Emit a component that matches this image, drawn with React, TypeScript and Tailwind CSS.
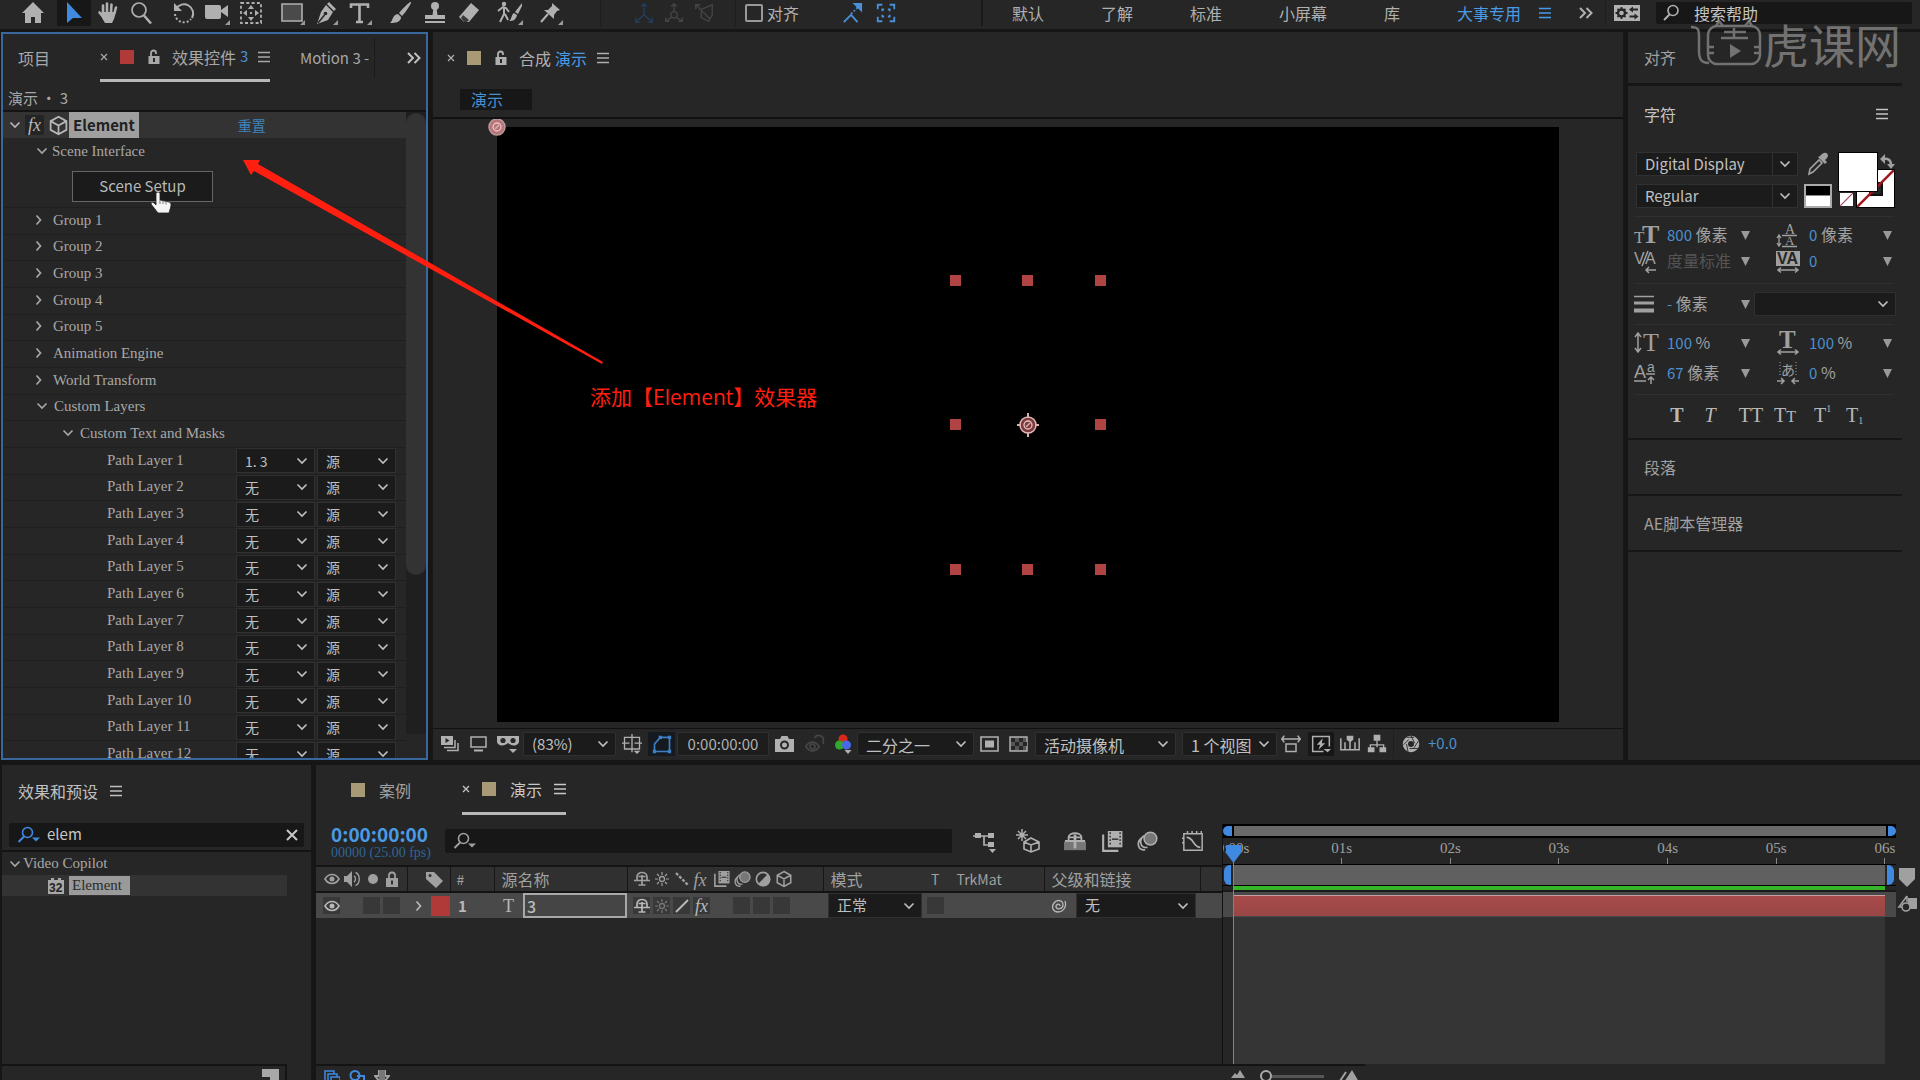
import type { ReactNode } from "react";

const sans = "font-['Noto_Sans_CJK_SC',sans-serif]";
const serif = "font-['Liberation_Serif','Noto_Sans_CJK_SC',serif]";

function Svg({ w = 20, h = w, box = "0 0 24 24", children }: { w?: number; h?: number; box?: string; children: ReactNode }) {
  return (
    <svg width={w} height={h} viewBox={box} fill="none" stroke="currentColor" strokeWidth="2" className="shrink-0">
      {children}
    </svg>
  );
}

const Down = () => (
  <Svg w={12} h={8} box="0 0 12 8"><path d="M1.5 1.5 6 6l4.5-4.5" strokeWidth="1.6" /></Svg>
);
const Right = () => (
  <Svg w={8} h={12} box="0 0 8 12"><path d="M1.5 1.5 5.5 6l-4 4.5" strokeWidth="1.7" /></Svg>
);
const Menu = () => (
  <Svg w={12} h={12} box="0 0 12 12"><path d="M0 1.5h12M0 6h12M0 10.5h12" strokeWidth="1.4" /></Svg>
);
const More = () => (
  <Svg w={14} h={12} box="0 0 14 12"><path d="M1 1l5 5-5 5M7.5 1l5 5-5 5" /></Svg>
);
const Close = () => (
  <Svg w={8} h={8} box="0 0 8 8"><path d="M1 1l6 6M7 1 1 7" strokeWidth="1.2" /></Svg>
);
const Unlock = () => (
  <Svg w={12} h={16} box="0 0 12 16">
    <path d="M3 8V4a2.5 2.5 0 0 1 5 0v1" strokeWidth="1.8" />
    <path d="M.5 7h11v8H.5z" fill="currentColor" stroke="none" />
    <path d="M6 9v4" stroke="#262626" />
  </Svg>
);
const Lock = () => (
  <Svg w={14} h={16} box="0 0 14 16">
    <path d="M4 8V4.500a3 3 0 0 1 6 0V8" strokeWidth="1.8" />
    <path d="M1 7h12v9H1z" fill="currentColor" stroke="none" />
    <path d="M7 9.500v4" stroke="#303030" />
  </Svg>
);
const Magnify = () => (
  <Svg w={18} h={18} box="0 0 18 18"><circle cx="11" cy="6.500" r="5" strokeWidth="1.6" /><path d="M7.500 10.500 2 16" /></Svg>
);
const MagnifyMenu = () => (
  <Svg w={24} h={18} box="0 0 24 18">
    <circle cx="10.5" cy="6.5" r="5" strokeWidth="1.6" />
    <path d="M7 10.5 1.5 16" />
    <path d="M15 11.5h8l-4 4z" fill="currentColor" stroke="none" />
  </Svg>
);
const Cube = ({ w = 18 }: { w?: number }) => (
  <Svg w={w}><path d="M12 2 21 7v10l-9 5-9-5V7zM3 7l9 5 9-5M12 12v10" /></Svg>
);
const Eye = () => (
  <Svg w={16} h={12} box="0 0 16 12">
    <path d="M1 6c3.5-6 10.5-6 14 0-3.5 6-10.5 6-14 0z" strokeWidth="1.6" />
    <circle cx="8" cy="6" r="2.5" fill="currentColor" stroke="none" />
  </Svg>
);
const Shy = () => (
  <Svg w={16} h={16} box="0 0 16 16">
    <path d="M3 9V6c0-6 10-6 10 0v3M0 9.5h16M8 4v10M4.500 14h7" strokeWidth="1.7" />
    <path d="M4.500 5.500h7" strokeWidth="1.5" />
  </Svg>
);
const Sun = () => (
  <Svg w={14} h={14} box="0 0 14 14">
    <circle cx="7" cy="7" r="2.5" strokeWidth="1.3" />
    <path d="M7 0v3M7 11v3M0 7h3M11 7h3M2 2l2 2M10 10l2 2M12 2l-2 2M4 10l-2 2" strokeWidth="1.2" />
  </Svg>
);
const Film = ({ w = 16 }: { w?: number }) => (
  <Svg w={w} box="0 0 18 18">
    <path d="M5 0h12.5v14H5z" fill="currentColor" stroke="none" />
    <path d="M1 3v14h13" strokeWidth="1.8" />
    <path d="M7 1v12M15.5 1v12" stroke="#2b2b2b" strokeWidth="1.2" strokeDasharray="1.5 1.5" />
    <path d="M8.5 7h5.5" stroke="#2b2b2b" strokeWidth="1.2" />
  </Svg>
);
const Blur = ({ w = 17 }: { w?: number }) => (
  <Svg w={w} box="0 0 18 18">
    <path d="M4 6c-5 4-3 11 3 10" strokeWidth="1.4" />
    <path d="M6 4c-5 4-3 11 3 10" strokeWidth="1.4" />
    <circle cx="11.5" cy="6.5" r="5.5" fill="#777" strokeWidth="1.3" />
  </Svg>
);
const Swirl = () => (
  <Svg w={16} h={16} box="0 0 16 16">
    <path d="M14 3c2 6-2 11-7 11C2 14 0 9 3 5c3-4 9-3 9 2 0 4-6 5-7 2C4.5 6 9 5 9 8" strokeWidth="1.3" />
  </Svg>
);
const Fx = () => <span className="font-['Liberation_Serif',serif] text-lg leading-4 italic">fx</span>;

// tools that hide further tools carry a small corner mark
const Corner = () => <path d="M24 19v5h-5z" fill="#9a9a9a" stroke="none" />;

const toolGroups: { name: string; icon: ReactNode }[][] = [
  [
    {
      name: "主页",
      icon: <Svg w={24}><path d="M12 1 1 12h3v10h6v-6h4v6h6V12h3z" fill="currentColor" stroke="none" /></Svg>,
    },
  ],
  [
    {
      name: "选取",
      icon: <Svg w={24}><path d="M5 1v21l6-5h9z" fill="#3f8ae0" stroke="none" /></Svg>,
    },
    {
      name: "手形",
      icon: (
        <Svg w={24}>
          <path d="M7 12V4.5M11 11V2.5M15 11l.5-7.5M18.5 12l1.5-5.5M8 17l-4.5-5.5" strokeWidth="2.6" strokeLinecap="round" />
          <path d="M5.5 11h14.5l-2 7-2 4H9l-3-5z" fill="currentColor" stroke="none" />
        </Svg>
      ),
    },
    {
      name: "缩放",
      icon: <Svg w={24}><circle cx="9" cy="9" r="7" strokeWidth="1.7" /><path d="m14 14.5 7 8" strokeWidth="2.6" /></Svg>,
    },
  ],
  [
    {
      name: "旋转",
      icon: (
        <Svg w={24}>
          <path d="M5 8a9 9 0 1 1 16 9" />
          <path d="M4 13a9 9 0 0 0 16 5" strokeDasharray="2 2" />
          <path d="M3 2v8h8z" fill="currentColor" stroke="none" />
        </Svg>
      ),
    },
    {
      name: "摄像机",
      icon: (
        <Svg w={26} box="0 0 26 26">
          <path d="M1 5h14a2 2 0 0 1 2 2v3l7-5v12l-7-5v5a2 2 0 0 1-2 2H3a2 2 0 0 1-2-2z" fill="currentColor" stroke="none" />
          <path d="M26 20v5h-5z" fill="#9a9a9a" stroke="none" />
        </Svg>
      ),
    },
    {
      name: "锚点",
      icon: (
        <Svg w={24}>
          <path d="M2 2h20v20H2z" strokeWidth="1.8" strokeDasharray="3 2.3" />
          <path d="m12 4 3 4H9zM12 20l3-4H9zM4 12l4-3v6zM20 12l-4-3v6z" fill="currentColor" stroke="none" />
          <path d="M11 11h2v2h-2z" fill="currentColor" stroke="none" />
        </Svg>
      ),
    },
  ],
  [
    {
      name: "矩形",
      icon: <Svg w={26} box="0 0 26 26"><path d="M3 4h20v17H3z" fill="#4a4a4a" strokeWidth="1.6" /><path d="M26 20v5h-5z" fill="#9a9a9a" stroke="none" /></Svg>,
    },
    {
      name: "钢笔",
      icon: (
        <Svg w={24}>
          <path d="M15 1l7 7-2 2-7-7zM12 4l7 7-5 8-11 4 4-12z" fill="currentColor" stroke="none" />
          <path d="m4 22 6.5-8" stroke="#262626" strokeWidth="1.5" /><circle cx="11.5" cy="12.500" r="1.8" fill="#262626" stroke="none" />
          <Corner />
        </Svg>
      ),
    },
    {
      name: "文字",
      icon: <Svg w={24}><path d="M3 7V3.5h17V7M11.500 3v18M8 21h7" strokeWidth="2.6" /><Corner /></Svg>,
    },
  ],
  [
    {
      name: "画笔",
      icon: (
        <Svg w={24}>
          <path d="M22 1c1 1-6 11-9 14l-3-3C13 8 21 0 22 1z" fill="currentColor" stroke="none" />
          <path d="M9 13l3 3c0 5-5 6-11 6 3-2 2-8 8-9z" fill="currentColor" stroke="none" />
        </Svg>
      ),
    },
    {
      name: "仿制图章",
      icon: (
        <Svg w={24}>
          <circle cx="12" cy="5" r="4" fill="currentColor" stroke="none" />
          <path d="M10.5 7h3l1 7h7.5v4H2v-4h7.5z" fill="currentColor" stroke="none" /><path d="M2 21h20" />
        </Svg>
      ),
    },
    {
      name: "橡皮擦",
      icon: (
        <Svg w={24}>
          <path d="m14 2 8 7-10 12H7l-5-5z" fill="currentColor" stroke="none" />
          <path d="m6 14 6 5-2 2H7l-3-4z" fill="#3a3a3a" stroke="none" />
        </Svg>
      ),
    },
  ],
  [
    {
      name: "Roto 笔刷",
      icon: (
        <Svg w={26} box="0 0 26 26">
          <circle cx="7" cy="4" r="2.2" fill="currentColor" stroke="none" />
          <path d="M1 11l5-4 3 1 3 4M7 8v6l-4 8M8 14l3 6" />
          <path d="M25 3 18 12l3 2 4-8zM17 13l3 2c-1 5-4 6-8 6 3-2 2-6 5-8z" fill="currentColor" stroke="none" />
          <path d="M26 20v5h-5z" fill="#9a9a9a" stroke="none" />
        </Svg>
      ),
    },
  ],
  [
    {
      name: "人偶位置控点",
      icon: (
        <Svg w={24}>
          <path d="m13 2 8 7-3 1-3 4v4L5 9h4l4-4z" fill="currentColor" stroke="none" /><path d="m9 13-7 8" />
          <Corner />
        </Svg>
      ),
    },
  ],
];

const workspaces = ["默认", "了解", "标准", "小屏幕", "库"];

function Toolbar() {
  return (
    <header className="flex h-8 shrink-0 items-center overflow-hidden border-b-3 border-[#161616] bg-[#262626] pb-[3px] text-base text-[#b0b0b0]">
      <div className="flex h-full items-center gap-[7px] pl-4">
        {toolGroups.map((group, g) => (
          <div key={g} className="flex h-full">
            {group.map((tool) => (
              <button
                key={tool.name}
                aria-label={tool.name}
                className={`flex w-[34px] items-center justify-center ${tool.name === "选取" ? "bg-[#171717]" : ""}`}
              >
                {tool.icon}
              </button>
            ))}
          </div>
        ))}
      </div>
      <div className="ml-8 flex h-full items-center border-l border-[#1d1d1d] pr-4 pl-7 text-[#444]">
        <button aria-label="本地轴" className="flex w-[30px] justify-center text-[#22405f]">
          <Svg w={22}><path d="M12 14V3M12 14l-8 7M12 14l8 7M9 5l3-3 3 3M3 17v5h5M21 17v5h-5" strokeWidth="1.5" /></Svg>
        </button>
        <button aria-label="世界轴" className="flex w-[30px] justify-center">
          <Svg w={22}><circle cx="12" cy="14" r="3.5" strokeWidth="1.5" /><path d="M12 11V3M9 17l-6 4M15 17l6 4M9 5l3-3 3 3M3 17v4h4M21 17v4h-4" strokeWidth="1.5" /></Svg>
        </button>
        <button aria-label="视图轴" className="flex w-[30px] justify-center">
          <Svg w={22}><path d="M3 3l15 15M3 8V3h5M9 8l12-5v11l-4 7-8-4z" strokeWidth="1.5" /></Svg>
        </button>
      </div>
      <label className="flex h-full items-center gap-1 border-l border-[#1d1d1d] pl-[9px]">
        <input type="checkbox" className="h-[18px] w-[18px] appearance-none rounded-xs border-2 border-[#999]" />
        对齐
      </label>
      <div className="ml-[42px] flex gap-3 text-[#4a90d9]">
        <button aria-label="对齐边缘" className="flex"><Svg w={22}><path d="m3 22 8-8 7 8" /><path d="m11 13 8-8" strokeDasharray="2 2" /><path d="M15 2h7v7z" fill="currentColor" /></Svg></button>
        <button aria-label="对齐范围" className="flex"><Svg w={22}><path d="M3 8V3h5M16 3h5v5M21 16v5h-5M8 21H3v-5M8 10V8h2M14 8h2v2M16 14v2h-2M10 16H8v-2" /></Svg></button>
      </div>
      <nav className="ml-auto flex h-full items-center gap-[57px] border-l-2 border-[#191919] pl-[29px]">
        {workspaces.map((name) => (
          <a key={name} href="#" className="whitespace-nowrap">{name}</a>
        ))}
        <a href="#" className="flex items-center gap-[18px] whitespace-nowrap text-[#4a9be6]">大事专用 <Menu /></a>
      </nav>
      <button aria-label="更多工作区" className="ml-7 flex"><More /></button>
      <div className="ml-3 flex h-full items-center border-l border-[#1d1d1d] pr-4 pl-2">
        <button aria-label="工作区设置" className="flex">
          <Svg w={26} h={16} box="0 0 26 16">
            <path d="M0 0h26v16H0z" fill="currentColor" stroke="none" />
            <circle cx="7.5" cy="8" r="3.5" stroke="#262626" strokeWidth="2.4" />
            <path d="M7.5 2v2M7.5 12v2M1.500 8h2M11.500 8h2M3.500 4l1.500 1.500M10 10.500l1.500 1.500M11.500 4 10 5.500M5 10.500 3.500 12" stroke="#262626" strokeWidth="1.8" />
            <path d="M18 4.500h6M15.500 11.500h6" stroke="#262626" strokeWidth="1.8" />
            <path d="M19 1.500v6l-4-3zM20.500 8.500v6l4-3z" fill="#262626" stroke="none" />
          </Svg>
        </button>
      </div>
      <label className="mr-2 flex h-[22px] w-64 items-center gap-3.5 rounded-xs bg-[#171717] pl-1.5">
        <Magnify />
        <input aria-label="搜索帮助" placeholder="搜索帮助" className="w-40 bg-transparent outline-none placeholder:text-[#c4c4c4]" />
      </label>
    </header>
  );
}

type SelectProps = { label: string; value: string; className: string; chevron?: string };

function Select({ label, value, className, chevron = "right-1.5" }: SelectProps) {
  return (
    <span className={`relative flex shrink-0 items-center border border-[#303030] bg-[#1b1b1b] text-[#c0c0c0] ${className}`}>
      <select aria-label={label} className="h-full w-full appearance-none bg-transparent pl-2 outline-none">
        <option>{value}</option>
      </select>
      <span className={`pointer-events-none absolute flex ${chevron}`}><Down /></span>
    </span>
  );
}

const groups = ["Group 1", "Group 2", "Group 3", "Group 4", "Group 5", "Animation Engine", "World Transform"];
const pathLayers = Array.from({ length: 12 }, (_, i) => `Path Layer ${i + 1}`);

function EffectControls() {
  const row = "flex items-center border-t border-[#1f1f1f]";
  return (
    <section className="ml-px flex w-[427px] shrink-0 flex-col overflow-hidden border-2 border-[#3b689c] bg-[#262626] text-base text-[#a8a8a8]">
      <div className="flex h-12 shrink-0 items-center pl-[15px]">
        <button>项目</button>
        <div className="ml-[50px] flex h-full w-[170px] shrink-0 items-center border-b-3 border-[#b8b8b8] whitespace-nowrap">
          <button aria-label="关闭" className="flex"><Close /></button>
          <span className="ml-3 h-3.5 w-3.5 shrink-0 bg-[#b03a38]" />
          <span className="mr-3 ml-3.5 flex"><Unlock /></span>
          效果控件 <span className="ml-1 text-[15px] text-[#4a90d0]">3</span>
          <button aria-label="面板菜单" className="ml-2.5 flex"><Menu /></button>
        </div>
        <div className="ml-[30px] flex h-10 w-[75px] items-center overflow-hidden border-r border-[#1a1a1a] text-[15px] whitespace-nowrap">
          Motion 3 - U
        </div>
        <button aria-label="更多" className="ml-8 flex text-[#c0c0c0]"><More /></button>
      </div>
      <p className="mt-1 h-[26px] shrink-0 border-b-2 border-[#141414] pl-[5px] text-[15px] leading-6">演示 • 3</p>
      <div className="flex min-h-0 flex-1">
        <div className="min-w-0 flex-1">
          <div className="flex h-[26px] items-center bg-[#333] pl-1.5 text-[#b8b8b8]">
            <Down />
            <span className="mx-1 flex w-[19px] justify-center bg-[#242424] py-0.5"><Fx /></span>
            <Cube w={21} />
            <span className="h-full bg-[#9f9f9f] px-1 text-[15px] leading-[26px] font-bold text-[#222]">Element</span>
            <a href="#" className="ml-[99px] text-sm text-[#3f83bb]">重置</a>
          </div>
          <div className={`flex h-[26px] items-center gap-1 pl-[33px] text-[15px] ${serif}`}>
            <Down /> <span>Scene Interface</span>
          </div>
          <div className="flex h-[43px] items-center pt-px pl-[69px]">
            <button className="h-[31px] w-[141px] border border-[#666] bg-[#1b1b1b] text-[15px] text-[#b8b8b8]">Scene Setup</button>
          </div>
          <div className={`grid h-[560px] auto-rows-fr text-[15px] ${serif}`}>
            {groups.map((name) => (
              <div key={name} className={`${row} gap-[10px] pb-0.5 pl-8`}>
                <Right /> {name}
              </div>
            ))}
            <div className={`${row} gap-1.5 pb-0.5 pl-[33px]`}><Down /> Custom Layers</div>
            <div className={`${row} gap-1.5 pb-0.5 pl-[59px]`}><Down /> Custom Text and Masks</div>
            {pathLayers.map((name, i) => (
              <div key={name} className={`${row} gap-0.5 pl-[104px]`}>
                <span className="w-[127px] pb-0.5">{name}</span>
                <Select label={name} value={i === 0 ? "1. 3" : "无"} className={`h-[25px] w-[79px] text-sm ${sans}`} />
                <Select label={`${name} 源`} value="源" className={`h-[25px] w-[79px] text-sm ${sans}`} />
              </div>
            ))}
          </div>
        </div>
        <div className="mb-6 w-5 shrink-0 bg-[#1f1f1f]">
          <div className="mt-px h-[462px] rounded-full bg-[#333]" />
        </div>
      </div>
    </section>
  );
}

const Handle = () => <span className="h-[11px] w-[11px] bg-[#b04442]" />;
const Anchor = ({ cross = true }: { cross?: boolean }) => (
  <Svg w={24}>
    <circle cx="12" cy="12" r="8" fill={cross ? "#7c3a3c" : "#b87478"} stroke={cross ? "#e0b6b6" : "#b89a9a"} strokeWidth="1.5" />
    <circle cx="12" cy="12" r="4" stroke="#e8c4c4" strokeWidth="1.3" />
    <path d="M10 14l4-4" stroke="#d8b0b0" strokeWidth="1.5" />
    {cross && <path d="M12 0v5M12 19v5M1 12h4M19 12h4" stroke="#d8b0b0" strokeWidth="2" />}
  </Svg>
);

function Composition() {
  return (
    <section className="flex min-w-0 flex-1 flex-col bg-[#262626] text-base text-[#b0b0b0]">
      <div className="flex h-[52px] shrink-0 items-center pl-3.5">
        <button aria-label="关闭" className="flex"><Close /></button>
        <span className="ml-3 h-3.5 w-3.5 bg-[#a89a74]" />
        <span className="mr-3 ml-3.5 flex"><Unlock /></span>
        合成 <span className="ml-1 text-[#4a9be6]">演示</span>
        <button aria-label="面板菜单" className="ml-[10px] flex"><Menu /></button>
      </div>
      <button className="mt-[5px] mb-[7px] ml-[27px] h-[21px] w-[72px] shrink-0 bg-[#171717] pl-[11px] text-left leading-[21px] text-[#4a90d0]">演示</button>
      <div className="relative flex min-h-0 flex-1 flex-col overflow-hidden border-t-2 border-[#111] px-16 pt-2 pb-1.5">
        <div className="flex flex-1 items-center justify-center bg-black">
          <div className="grid h-[300px] w-[157px] grid-cols-3 content-between justify-items-center">
            <span className="flex w-full"><Handle /></span>
            <Handle />
            <span className="flex w-full justify-end"><Handle /></span>
            <span className="flex w-full items-center"><Handle /></span>
            <Anchor />
            <span className="flex w-full items-center justify-end"><Handle /></span>
            <span className="flex w-full"><Handle /></span>
            <Handle />
            <span className="flex w-full justify-end"><Handle /></span>
          </div>
        </div>
        <span className="absolute -top-1 left-[52px]"><Anchor cross={false} /></span>
      </div>
      <ViewerFooter />
    </section>
  );
}

function ViewerFooter() {
  const box = "h-6 rounded-xs";
  return (
    <div className="flex h-8 shrink-0 items-center border-t border-[#111] pb-0.5 pl-2">
      <div className="mr-1 flex w-[78px] items-center justify-between">
        <button aria-label="始终预览" className="flex">
          <Svg w={18} h={16} box="0 0 18 16">
            <path d="M0 0h12v9H0z" fill="currentColor" stroke="none" /><path d="m4.5 2 4 2.5-4 2.5z" fill="#262626" stroke="none" />
            <path d="M3 11.5h11V4M6 14.5h11V7" strokeWidth="1.5" />
          </Svg>
        </button>
        <button aria-label="显示器" className="flex">
          <Svg w={17} h={16} box="0 0 17 16"><path d="M1 1h15v10H1z" strokeWidth="1.5" /><path d="M4 14.5h9" /></Svg>
        </button>
        <button aria-label="蒙版视图" className="flex">
          <Svg w={22} h={20} box="0 0 22 20">
            <path d="M0 2h22v5c0 5-7 6-11 2-4 4-11 3-11-2z" fill="currentColor" stroke="none" />
            <circle cx="6" cy="6.5" r="2.6" fill="#262626" stroke="none" /><circle cx="16" cy="6.5" r="2.6" fill="#262626" stroke="none" />
            <path d="M12 15h8l-4 4z" fill="currentColor" stroke="none" />
          </Svg>
        </button>
      </div>
      <Select label="放大率" value="(83%)" className={`${box} w-[93px] text-[15px]`} />
      <button aria-label="网格" className="ml-1.5 flex">
        <Svg w={20}><path d="M3 4h18v14H3zM12 0v22M0 11h9M15 11h9" strokeWidth="1.6" /><path d="M14 20h8l-4 4z" fill="currentColor" stroke="none" /></Svg>
      </button>
      <button aria-label="蒙版可见性" className="mr-0.5 ml-1.5 flex h-6 w-[27px] items-center justify-center bg-[#151a21] text-[#3f7fc4]">
        <Svg w={20}><path d="M3 21V12l7-8h11v17z" /><path d="M1 19h4v4H1zM19 19h4v4h-4zM19 2h4v4h-4zM8 2h4v4H8z" fill="currentColor" stroke="none" /></Svg>
      </button>
      <button className={`${box} w-[92px] border border-[#303030] bg-[#1d1d1d] text-[15px] leading-[22px]`}>0:00:00:00</button>
      <div className="ml-1.5 flex w-[78px] items-center justify-between">
        <button aria-label="拍摄快照" className="flex">
          <Svg w={19} h={16} box="0 0 19 16">
            <path d="M0 3h5l1.5-3h6L14 3h5v13H0z" fill="currentColor" stroke="none" /><circle cx="9.5" cy="9" r="3.5" stroke="#262626" />
          </Svg>
        </button>
        <button aria-label="显示快照" className="flex text-[#464646]">
          <Svg w={20}><path d="M1 15c4-7 12-7 16 0-4 7-12 7-16 0zM12 5c1-5 9-4 10 1v6" /><circle cx="9" cy="15" r="3" /></Svg>
        </button>
        <button aria-label="通道" className="flex">
          <Svg w={18} h={20} box="0 0 18 20">
            <circle cx="8" cy="5" r="4.5" fill="#d8281c" stroke="none" />
            <circle cx="4.5" cy="11" r="4.5" fill="#2fa82c" stroke="none" />
            <circle cx="11.5" cy="11" r="4.5" fill="#4868e8" stroke="none" />
            <path d="M9.5 16h7l-3.5 4z" fill="currentColor" stroke="none" />
          </Svg>
        </button>
      </div>
      <Select label="分辨率" value="二分之一" className={`${box} ml-1 w-[117px]`} />
      <button aria-label="目标区域" className="mx-1.5 flex">
        <Svg w={19} h={16} box="0 0 19 16"><path d="M1 1h17v14H1z" strokeWidth="1.6" /><path d="M5 4.5h9v7H5z" fill="currentColor" stroke="none" /></Svg>
      </button>
      <button aria-label="透明网格" className="mx-1 flex">
        <Svg w={19} h={16} box="0 0 19 16">
          <path d="M1 1h17v14H1z" fill="#555" strokeWidth="1.4" />
          <path d="M2 4h16M2 12h16" stroke="#262626" strokeWidth="4" strokeDasharray="4 4" /><path d="M6 8h12" stroke="#262626" strokeWidth="4" strokeDasharray="4 4" />
        </Svg>
      </button>
      <Select label="3D 视图" value="活动摄像机" className={`${box} ml-[3px] w-[141px]`} />
      <Select label="视图布局" value="1 个视图" className={`${box} ml-1.5 w-[95px]`} />
      <div className="ml-1 flex h-full w-[113px] items-center justify-between border-r border-[#1f1f1f] pr-1.5">
        <button aria-label="像素长宽比" className="flex">
          <Svg w={20}><path d="M1 6h22M4 2 1 6l3 4M20 2l3 4-3 4M6 12h12v9H6z" strokeWidth="1.8" /></Svg>
        </button>
        <button aria-label="快速预览" className="flex h-6 w-[26px] items-center justify-center bg-[#171717]">
          <Svg w={20}><path d="M15 21H2V3h20v12" strokeWidth="1.8" /><path d="m14 5-7 8h4l-2 6 8-8h-4zM15 18h9l-4 4z" fill="currentColor" stroke="none" /></Svg>
        </button>
        <button aria-label="时间轴" className="flex">
          <Svg w={20}><path d="M1 5v14h22V5M6 10v8M18 10v8M12 8v10" strokeWidth="1.8" /><path d="M8 2h8v5l-4 3-4-3z" fill="currentColor" stroke="none" /></Svg>
        </button>
        <button aria-label="合成流程图" className="flex">
          <Svg w={20}><path d="M12 8v5M4 17v-4h16v4M12 13v3" strokeWidth="1.6" /><path d="M8 1h8v7H8zM1 16h8v6H1zM15 16h8v6h-8z" fill="currentColor" stroke="none" /></Svg>
        </button>
      </div>
      <button aria-label="重置曝光度" className="ml-2 flex">
        <Svg w={18}><circle cx="12" cy="12" r="7.5" strokeWidth="7" /><path d="M12 1l5 10M22 8l-6 9M21 18H10M8 22 6 12M2 13l7-7M6 3h10" stroke="#262626" strokeWidth="1.2" /></Svg>
      </button>
      <span className="ml-2 text-[15px] text-[#4a90d0]">+0.0</span>
    </div>
  );
}

function Metric({ icon, value, unit, dim }: { icon: ReactNode; value?: string; unit?: string; dim?: boolean }) {
  return (
    <div className="flex h-[26px] flex-1 items-center">
      <span className="flex w-[33px] shrink-0">{icon}</span>
      <span className="flex-1 pb-0.5 whitespace-nowrap">
        {value && <span className="text-[15px] text-[#4a90d0]">{value}</span>} <span className={dim ? "text-[#555]" : ""}>{unit}</span>
      </span>
      <Svg w={9} h={9} box="0 0 9 9"><path d="M0 0h9L4.500 9z" fill="#999" stroke="none" /></Svg>
    </div>
  );
}

// glyph icons of the character panel
function Letters({ children }: { children: ReactNode }) {
  return (
    <svg width="26" height="26" viewBox="0 0 26 26" fill="currentColor" className="font-['Liberation_Serif',serif]">
      {children}
    </svg>
  );
}

const HArrow = ({ y }: { y: number }) => (
  <path d={`M3 ${y}h18M5 ${y - 2.5}l-3 2.5 3 2.5M19 ${y - 2.5}l3 2.5-3 2.5`} fill="none" stroke="currentColor" strokeWidth="1.5" />
);

function CharacterPanel() {
  const title = "flex items-center border-[#161616] pl-4";
  const rule = "ml-1.5 mr-2 border-b border-[#303030]";
  const divided = "right-0 h-full items-center border-l border-[#303030] px-1.5";
  return (
    <aside className="w-[292px] shrink-0 bg-[#262626] pr-[18px] text-base text-[#a0a0a0]">
      <h2 className={`${title} h-[54px] border-b-3 pb-px`}>对齐</h2>
      <h2 className="flex h-[60px] items-center justify-between pr-3.5 pb-1 pl-4 text-[#c4c4c4]">
        字符 <button aria-label="面板菜单" className="flex"><Menu /></button>
      </h2>
      <div className="flex pt-1.5 pb-2 pl-2">
        <div className="flex flex-col gap-2">
          <Select label="字体" value="Digital Display" className="h-6 w-[162px] text-[15px]" chevron={divided} />
          <Select label="样式" value="Regular" className="h-6 w-[162px] text-[15px]" chevron={divided} />
        </div>
        <div className="ml-1.5 flex flex-col items-center justify-between">
          <Svg w={24}><path d="m3 22 1-5L13 8l3 3-9 9-4 2z" strokeWidth="1.6" /><path d="m12 5 7 7 2-2-2-2c5-3 3-8-1-7-2 .5-3 2-4 3z" fill="currentColor" stroke="none" /></Svg>
          <span className="h-6 w-7 border-2 border-[#aaa] bg-white"><span className="block h-[10px] border-b border-[#888] bg-black" /></span>
        </div>
        <div className="relative ml-1.5 h-14 w-[57px]">
          <span className="absolute right-0 bottom-0 flex border border-black bg-white">
            <Svg w={37} h={37} box="0 0 37 37"><path d="M13 13h12v12H13z" fill="#262626" stroke="#111" /><path d="M0 37 37 0" stroke="#a3171c" strokeWidth="2.5" /></Svg>
          </span>
          <span className="absolute top-0 left-0 h-10 w-10 border border-black bg-white" />
          <span className="absolute bottom-0.5 left-0.5 flex bg-white"><Svg w={13} h={13} box="0 0 13 13"><path d="M0 13 13 0" stroke="#a04a5a" strokeWidth="1.2" /></Svg></span>
          <span className="absolute top-0.5 right-0 flex"><Svg w={15} h={15} box="0 0 15 15"><path d="M3 5c5-1 8 1 8 6" strokeWidth="2.5" /><path d="M5 0v10L0 5zM7 10h8l-4 5z" fill="currentColor" stroke="none" /></Svg></span>
        </div>
      </div>
      <div className={rule} />
      <div className="flex gap-[26px] pt-[5px] pr-2.5 pl-1.5">
        <Metric icon={<Letters><text x="0" y="21" fontSize="17">T</text><text x="8" y="21" fontSize="26" fontWeight="bold">T</text></Letters>} value="800" unit="像素" />
        <Metric icon={<Letters><text x="9" y="12" fontSize="14">A</text><text x="9" y="23" fontSize="13">A</text><path d="M6 13.5h15M6 24.5h15M3 13v11M1 16l2-3 2 3M1 21l2 3 2-3" fill="none" stroke="currentColor" strokeWidth="1.3" /></Letters>} value="0" unit="像素" />
      </div>
      <div className="flex gap-[26px] pr-2.5 pb-[9px] pl-1.5">
        <Metric dim icon={<Letters><text x="0" y="16" fontSize="16" fontFamily="Liberation Sans">V</text><text x="11" y="16" fontSize="16" fontFamily="Liberation Sans">A</text><path d="m8 18 6-15M22 22H12M15 19l-3 3 3 3" fill="none" stroke="currentColor" strokeWidth="1.5" /></Letters>} unit="度量标准" />
        <Metric icon={<Letters><path d="M0 3h24v15H0z" /><text x="1" y="16" fontSize="16" fontWeight="bold" fontFamily="Liberation Sans" fill="#262626">VA</text><HArrow y={22} /></Letters>} value="0" />
      </div>
      <div className={rule} />
      <div className="flex h-10 items-center pr-[7px] pl-1.5">
        <div className="flex w-[116px] shrink-0"><Metric icon={<Svg w={20} h={18} box="0 0 20 18"><path d="M0 1.5h20" strokeWidth="1.5" /><path d="M0 8h20" strokeWidth="3" /><path d="M0 15.5h20" strokeWidth="4" /></Svg>} value="-" unit="像素" /></div>
        <Select label="描边方式" value="" className="ml-1 h-6 w-[142px]" />
      </div>
      <div className={rule} />
      <div className="flex gap-[26px] pt-[5px] pr-2.5 pl-1.5">
        <Metric icon={<Letters><text x="9" y="21" fontSize="26">T</text><path d="M4 4v17M1 7l3-4 3 4M1 18l3 4 3-4" fill="none" stroke="currentColor" strokeWidth="1.5" /></Letters>} value="100" unit="%" />
        <Metric icon={<Letters><text x="3" y="18" fontSize="25" fontWeight="bold">T</text><HArrow y={22} /></Letters>} value="100" unit="%" />
      </div>
      <div className="flex gap-[26px] pt-1 pr-2.5 pb-2 pl-1.5">
        <Metric icon={<Letters><text x="0" y="18" fontSize="18" fontFamily="Liberation Sans">A</text><text x="13" y="12" fontSize="14" fontFamily="Liberation Sans">a</text><path d="M0 21h12M12 14h9M17 24v-7M14 20l3-3 3 3" fill="none" stroke="currentColor" strokeWidth="1.5" /></Letters>} value="67" unit="像素" />
        <Metric icon={<Letters><text x="5" y="15" fontSize="14" fontFamily="Noto Sans CJK JP">あ</text><path d="M4 2v14M20 2v14" fill="none" stroke="currentColor" strokeDasharray="1 2" /><path d="M1 21h6M5 18l3 3-3 3M23 21h-6M19 18l-3 3 3 3" fill="none" stroke="currentColor" strokeWidth="1.5" /></Letters>} value="0" unit="%" />
      </div>
      <div className={rule} />
      <div className="flex h-[45px] items-center border-b-2 border-[#161616] pb-1 pl-[41px] font-['Liberation_Serif',serif] text-xl text-[#b8b8b8]">
        <button aria-label="仿粗体" className="w-4 font-bold">T</button>
        <button aria-label="仿斜体" className="ml-[17px] w-4 italic">T</button>
        <button aria-label="全部大写" className="ml-5 w-[26px]">TT</button>
        <button aria-label="小型大写" className="ml-2 w-[26px]">T<span className="text-base">T</span></button>
        <button aria-label="上标" className="ml-4 flex w-5">T<span className="text-[10px] leading-4">1</span></button>
        <button aria-label="下标" className="ml-3 flex w-5 items-end">T<span className="text-[10px] leading-4">1</span></button>
      </div>
      <h2 className={`${title} h-14 border-b-2`}>段落</h2>
      <h2 className={`${title} h-14 border-b-2`}>AE脚本管理器</h2>
    </aside>
  );
}

function EffectsPresets() {
  return (
    <section className="ml-0.5 flex w-[309px] shrink-0 flex-col bg-[#262626] text-[#a8a8a8]">
      <h2 className="flex h-[54px] shrink-0 items-center gap-3 pb-0.5 pl-4 text-base text-[#c0c0c0]">
        效果和预设 <button aria-label="面板菜单" className="flex"><Menu /></button>
      </h2>
      <div className="mx-[7px] mt-1 flex h-6 shrink-0 items-center rounded-xs bg-[#171717] pr-1.5 pl-2 text-[15px] text-[#c8c8c8]">
        <span className="text-[#3f8ae0]"><MagnifyMenu /></span>
        <input aria-label="搜索效果" defaultValue="elem" className="ml-1.5 min-w-0 flex-1 bg-transparent pb-0.5 outline-none" />
        <button aria-label="清除" className="flex"><Svg w={12} h={12} box="0 0 12 12"><path d="m1 1 10 10M11 1 1 11" /></Svg></button>
      </div>
      <div className={`mt-[3px] mr-6 flex-1 text-[15px] ${serif}`}>
        <div className="-mr-6 border-t-2 border-[#141414]" />
        <div className="flex h-[23px] items-center gap-0.5 pl-[7px]"><Down /> Video Copilot</div>
        <div className="flex h-[21px] items-center bg-[#333] pl-[46px]">
          <Svg w={16} h={16} box="0 0 16 16">
            <path d="M0 2h3V0h3v2h4V0h3v2h3v14H0z" fill="currentColor" stroke="none" />
            <text x="1" y="14" fontSize="12" fontWeight="bold" fontFamily="Liberation Sans" fill="#222" stroke="none">32</text>
          </Svg>
          <span className="ml-[5px] bg-[#9a9a9a] pr-2 pl-[3px] leading-[19px] text-[#2a2a2a]">Element</span>
        </div>
      </div>
      <div className="mr-6 flex h-4 shrink-0 justify-end border-t-2 border-r-2 border-[#141414] pt-[3px] pr-1.5">
        <Svg w={17} h={12} box="0 0 17 12"><path d="M0 0h17v12H8V8H0z" fill="currentColor" stroke="none" /></Svg>
      </div>
    </section>
  );
}

const Cell = ({ children }: { children?: ReactNode }) => (
  <span className="flex h-[17px] w-[17px] items-center justify-center bg-[#383838]">{children}</span>
);
const th = "border-l border-[#161616] font-normal text-left";

function LayerTable() {
  return (
    <table className="w-full table-fixed border-collapse text-base">
      <colgroup>
        <col className="w-[91px]" /><col className="w-[43px]" /><col className="w-[44px]" />
        <col className="w-[133px]" /><col className="w-[196px]" /><col className="w-[104px]" />
        <col className="w-[117px]" /><col className="w-[156px]" /><col className="w-[22px]" />
      </colgroup>
      <thead>
        <tr className="h-[26px] border-y-2 border-[#141414] bg-[#303030] leading-5">
          <th className="font-normal">
            <span className="flex items-center gap-1 pl-2">
              <Eye />
              <Svg w={17} h={16} box="0 0 17 16"><path d="M0 5h3l5-5v16l-5-5H0z" fill="currentColor" stroke="none" /><path d="M10 5c2 1 2 5 0 6M11.5 1.5c5 2 5 11 0 13" strokeWidth="1.4" /></Svg>
              <Svg w={16} h={10} box="0 0 16 10"><circle cx="8" cy="5" r="5" fill="currentColor" stroke="none" /></Svg>
              <Lock />
            </span>
          </th>
          <th className={th}>
            <span className="flex pl-[18px]"><Svg w={17} h={17} box="0 0 17 17"><path d="M0 1h8l9 9-7 7-10-9z" fill="currentColor" stroke="none" /><circle cx="4" cy="4.5" r="1.5" fill="#303030" stroke="none" /></Svg></span>
          </th>
          <th className={`${th} pl-1.5 text-sm`}>#</th>
          <th className={`${th} pl-[7px]`}>源名称</th>
          <th className={th}>
            <span className="flex items-center gap-1 pl-1.5">
              <Shy />
              <span className="flex w-4 justify-center"><Sun /></span>
              <Svg w={16} h={16} box="0 0 16 16"><path d="m2 2 12 12" strokeWidth="2.4" strokeDasharray="3 1.5" /></Svg>
              <span className="w-4"><Fx /></span>
              <Film />
              <Blur />
              <Svg w={16}><circle cx="12" cy="12" r="10" strokeWidth="2.5" /><path d="M19 5A10 10 0 1 1 5 19z" fill="currentColor" stroke="none" /></Svg>
              <Cube />
            </span>
          </th>
          <th className={`${th} pl-[7px]`}>模式</th>
          <th className="pl-1 text-left text-sm font-normal"><span className="mr-3.5">T</span> TrkMat</th>
          <th className={`${th} pl-[7px]`}>父级和链接</th>
          <th className={th} />
        </tr>
      </thead>
      <tbody>
        <tr className="h-[26px] bg-[#494949] text-[#b8b8b8]">
          <td className="p-0"><span className="flex pl-[7px]"><Cell><Eye /></Cell><span className="ml-[23px] flex gap-[3px]"><Cell /><Cell /></span></span></td>
          <td className="p-0"><span className="flex items-center pl-2"><Right /><span className="ml-2 h-5 w-5 bg-[#b03a38]" /></span></td>
          <td className="p-0 pl-2 text-[15px] leading-5 font-bold">1</td>
          <td className="p-0">
            <span className="flex items-center">
              <span className="w-[29px] text-center font-['Liberation_Serif',serif] text-lg leading-5">T</span>
              <input aria-label="图层名称" defaultValue="3" className="h-[25px] w-[104px] border-2 border-[#a8a8a8] bg-[#454545] px-0.5 font-medium outline-none" />
            </span>
          </td>
          <td className="p-0">
            <span className="flex gap-[3px] pl-1.5">
              <Cell><Shy /></Cell>
              <span className="flex text-[#777]"><Cell><Sun /></Cell></span>
              <Cell><Svg w={14} h={14} box="0 0 14 14"><path d="M1 13 13 1" /></Svg></Cell>
              <Cell><Fx /></Cell>
              <span className="ml-5 flex gap-[3px]"><Cell /><Cell /><Cell /></span>
            </span>
          </td>
          <td className="p-0 pl-[5px]"><Select label="模式" value="正常" className="h-[25px] w-[94px] text-[15px]" /></td>
          <td className="p-0"><Cell /></td>
          <td className="p-0"><span className="flex items-center gap-[9px] pl-[7px]"><Swirl /><Select label="父级" value="无" className="h-[25px] w-[120px] text-[15px]" /></span></td>
          <td />
        </tr>
      </tbody>
    </table>
  );
}

const seconds = ["0:00s", "01s", "02s", "03s", "04s", "05s", "06s"];

function TimeGraph() {
  return (
    <div className="relative mt-[59px] flex min-w-0 flex-1 flex-col border-l border-[#111]">
      {/* navigator */}
      <div className="flex h-3.5 shrink-0 items-stretch gap-0.5 border-y-2 border-black bg-black">
        <span className="w-[9px] rounded-l-full bg-[#3f8ae0]" />
        <span className="flex-1 bg-[#6a6a6a]" />
        <span className="w-2 rounded-r-full bg-[#3f8ae0]" />
      </div>
      {/* ruler */}
      <div className="flex h-[26px] shrink-0 justify-between overflow-hidden pr-[11px] pl-[10px]">
        {seconds.map((s) => (
          <div key={s} className="flex w-0 flex-col items-center justify-between">
            <span className={`text-[15px] leading-5 ${serif}`}>{s}</span>
            <span className="h-1.5 w-px bg-[#888]" />
          </div>
        ))}
      </div>
      {/* work area */}
      <div className="flex h-[22px] shrink-0 gap-0.5 border-y border-black">
        <span className="ml-px w-[7px] rounded-l-md bg-[#3f8ae0]" />
        <span className="flex-1 bg-[#606060]" />
        <span className="mr-0.5 w-[7px] rounded-r-md bg-[#3f8ae0]" />
      </div>
      <div className="mr-[11px] ml-[10px] h-1 shrink-0 bg-[#37b52a]" />
      <div className="h-[27px] shrink-0 border-t-2 border-[#1a1a1a] bg-[#494949] pt-[3px] pr-[11px] pl-[10px]">
        <div className="h-[21px] border-t border-[#c8a0a0] bg-linear-to-b from-[#a84a4a] to-[#984646]" />
      </div>
      <div className="mr-[11px] ml-[10px] flex-1 bg-[#353535]" />
      {/* playhead */}
      <div className="absolute top-[21px] bottom-0 left-[3px] flex w-[15px] flex-col items-center">
        <Svg w={15} h={18} box="0 0 15 18"><path d="M0 0h15v8l-7.5 10L0 8z" fill="#3f8ae0" stroke="none" /></Svg>
        <span className="w-px flex-1 bg-[#4a90d9]" />
      </div>
    </div>
  );
}

function Timeline() {
  return (
    <section className="flex min-w-0 flex-1 flex-col bg-[#262626] text-[#a0a0a0]">
      <div className="flex min-h-0 flex-1">
        <div className="w-[906px] shrink-0">
          <div className="flex h-[50px] items-center pl-[35px] text-base">
            <span className="mr-3.5 h-3.5 w-3.5 bg-[#a89a74]" />
            <button>案例</button>
            <div className="ml-[51px] flex h-full w-[104px] items-center border-b-3 border-[#b8b8b8] text-[#c8c8c8]">
              <button aria-label="关闭" className="flex"><Close /></button>
              <span className="mr-3.5 ml-3 h-3.5 w-3.5 bg-[#a89a74]" />
              演示
              <button aria-label="面板菜单" className="ml-3 flex"><Menu /></button>
            </div>
          </div>
          <div className="flex h-[50px] items-center pt-0.5 pl-[15px]">
            <div className="w-[114px] whitespace-nowrap">
              <p className="text-[19px] leading-6 font-bold text-[#4a9be6]">0:00:00:00</p>
              <p className={`text-sm leading-[14px] text-[#2d6596] ${serif}`}>00000 (25.00 fps)</p>
            </div>
            <label className="flex h-6 w-[507px] items-center rounded-xs bg-[#171717] pl-2">
              <MagnifyMenu />
              <input aria-label="搜索图层" className="w-full bg-transparent outline-none" />
            </label>
            <div className="ml-5 flex items-center text-[#b0b0b0]">
              <button aria-label="合成微型流程图" className="mr-5 flex"><Svg w={24}><path d="M1 7h10M11 7h6M12 7v9h5" strokeWidth="1.7" /><path d="M3 4h6v5H3zM16 4h6v5h-6zM16 13h6v5h-6zM17 20h7l-3.5 4z" fill="currentColor" stroke="none" /></Svg></button>
              <button aria-label="草图 3D" className="mr-5 flex"><Svg w={24}><path d="M15 9l8 4v7l-8 3-7-3v-7zM8 13l7 3 8-3M15 16v7" strokeWidth="1.6" /><path d="M6 0v12M0 6h12M2 2l8 8M10 2l-8 8" strokeWidth="1.5" /></Svg></button>
              <button aria-label="隐藏图层" className="mr-4 ml-1 flex"><Svg w={22}><path d="M0 13h24v9H0z" fill="#777" stroke="none" /><path d="M5 12V8c0-6 14-6 14 0v4M1 12h22M6 8h12" /><path d="M12 5v15" strokeWidth="3" /></Svg></button>
              <button aria-label="帧混合" className="mr-3.5 flex"><Film w={21} /></button>
              <button aria-label="运动模糊" className="mr-[24px] flex"><Blur w={21} /></button>
              <button aria-label="图表编辑器" className="flex"><Svg w={22}><path d="M2 4h20v18H2zM6 1v3M11 1v3M16 1v3M21 1v3M0 9h2M0 14h2" strokeWidth="1.6" /><path d="M5 8c8 0 7 11 15 11" /></Svg></button>
            </div>
          </div>
          <LayerTable />
        </div>
        <TimeGraph />
        <div className="flex w-6 shrink-0 flex-col items-center gap-2 pt-[103px] pr-0.5">
          <Svg w={16} h={19} box="0 0 16 19"><path d="M0 0h16v11l-8 8-8-8z" fill="currentColor" stroke="none" /></Svg>
          <Svg w={20} h={18} box="0 0 20 18"><path d="M11 3h9v11h-9z" fill="currentColor" stroke="none" /><path d="M10 1 2 12h6M10 1v6" strokeWidth="1.6" /><circle cx="9" cy="12" r="4" fill="#262626" strokeWidth="1.6" /></Svg>
        </div>
      </div>
      <div className="flex h-4 w-[1049px] shrink-0 gap-[9px] overflow-hidden border-t-2 border-[#141414] pt-1 pl-2">
        <button aria-label="图层开关" className="flex text-[#3f8ae0]"><Svg w={16} h={16} box="0 0 16 16"><path d="M1 11V1h9v3M4 13V4h9v3M7 7h9v9H7z" strokeWidth="1.5" /></Svg></button>
        <button aria-label="转换控制" className="flex text-[#3f8ae0]"><Svg w={16} h={16} box="0 0 16 16"><circle cx="6" cy="5.5" r="4.5" /><path d="M8 6h7v9H8" /></Svg></button>
        <button aria-label="入点出点" className="flex"><Svg w={16} h={16} box="0 0 16 16"><path d="M5 0v6H1l5 6M11 0v6h4l-5 6" /><path d="M5 0h6v12H5z" fill="#777" stroke="none" /></Svg></button>
        <span className="ml-auto flex"><Svg w={14} h={10} box="0 0 14 10"><path d="m0 8 4-5 2 2 3-5 5 8z" fill="currentColor" stroke="none" /></Svg></span>
        <input type="range" aria-label="缩放时间" defaultValue={0} className="ml-1.5 h-3 w-16 appearance-none bg-[linear-gradient(#555,#555)] bg-[length:100%_3px] bg-center bg-no-repeat [&::-webkit-slider-thumb]:h-3 [&::-webkit-slider-thumb]:w-3 [&::-webkit-slider-thumb]:appearance-none [&::-webkit-slider-thumb]:rounded-full [&::-webkit-slider-thumb]:border-2 [&::-webkit-slider-thumb]:border-[#aaa] [&::-webkit-slider-thumb]:bg-[#262626]" />
        <span className="mr-1.5 ml-1.5 flex"><Svg w={20} h={12} box="0 0 20 12"><path d="m1 11 6-9" /><path d="m5 12 8-12 7 12z" fill="currentColor" stroke="none" /></Svg></span>
      </div>
    </section>
  );
}

function Watermark() {
  return (
    <div className="pointer-events-none absolute top-[19px] right-[19px] flex items-center text-[#858585] opacity-80">
      <Svg w={72} h={48} box="0 0 72 48">
        <g strokeWidth="2.5">
          <path d="M0 8c7 0 8 2 8 10v14c0 9 3 12 10 12" />
          <rect x="17" y="7" width="52" height="38" rx="9" />
          <path d="m25 7 3-5 4 5M54 7l4-5 3 5M43 9v9M33 13h22M30 19h27" />
          <path d="M17 28h6M17 34h6M63 28h6M63 34h6" />
        </g>
        <path d="m39 25 11 7-11 7z" fill="currentColor" stroke="none" />
      </Svg>
      <span className="text-[46px] leading-[48px]">虎课网</span>
    </div>
  );
}

function Annotation() {
  return (
    <>
      <svg width="366" height="210" viewBox="240 157 366 210" fill="#ff1f10" className="pointer-events-none absolute top-[157px] left-60">
        <path d="M243 160h17l-2 4 345 198-1 2-348-193-3 4z" />
      </svg>
      <p className="pointer-events-none absolute top-[383px] left-[590px] font-['Open_Sans','Noto_Sans_CJK_SC',sans-serif] text-[21px] leading-7 whitespace-nowrap text-[#ff1f10]">
        添加【Element】效果器
      </p>
      <svg width="22" height="22" viewBox="0 0 22 22" className="pointer-events-none absolute top-[192px] left-[150px]">
        <path d="M8 0c1.5 0 2 1 2 2v6l9 2c2 .5 2 2 2 4l-2 7H8L1 12c0-2 2-2 3-1l2 2V2c0-1 .5-2 2-2z" fill="#f4f4f4" stroke="#222" strokeWidth="0.8" />
        <path d="M10 8v4M13 9v3M16 9.5v3" stroke="#777" />
      </svg>
    </>
  );
}

export default function App() {
  return (
    <div className={`relative flex h-screen flex-col overflow-hidden bg-[#161616] ${sans}`}>
      <Toolbar />
      <main className="flex min-h-0 flex-1 flex-col gap-[5px]">
        <div className="flex min-h-0 flex-1 gap-[5px]">
          <EffectControls />
          <Composition />
          <CharacterPanel />
        </div>
        <div className="flex h-[315px] shrink-0 gap-[5px]">
          <EffectsPresets />
          <Timeline />
        </div>
      </main>
      <Annotation />
      <Watermark />
    </div>
  );
}
